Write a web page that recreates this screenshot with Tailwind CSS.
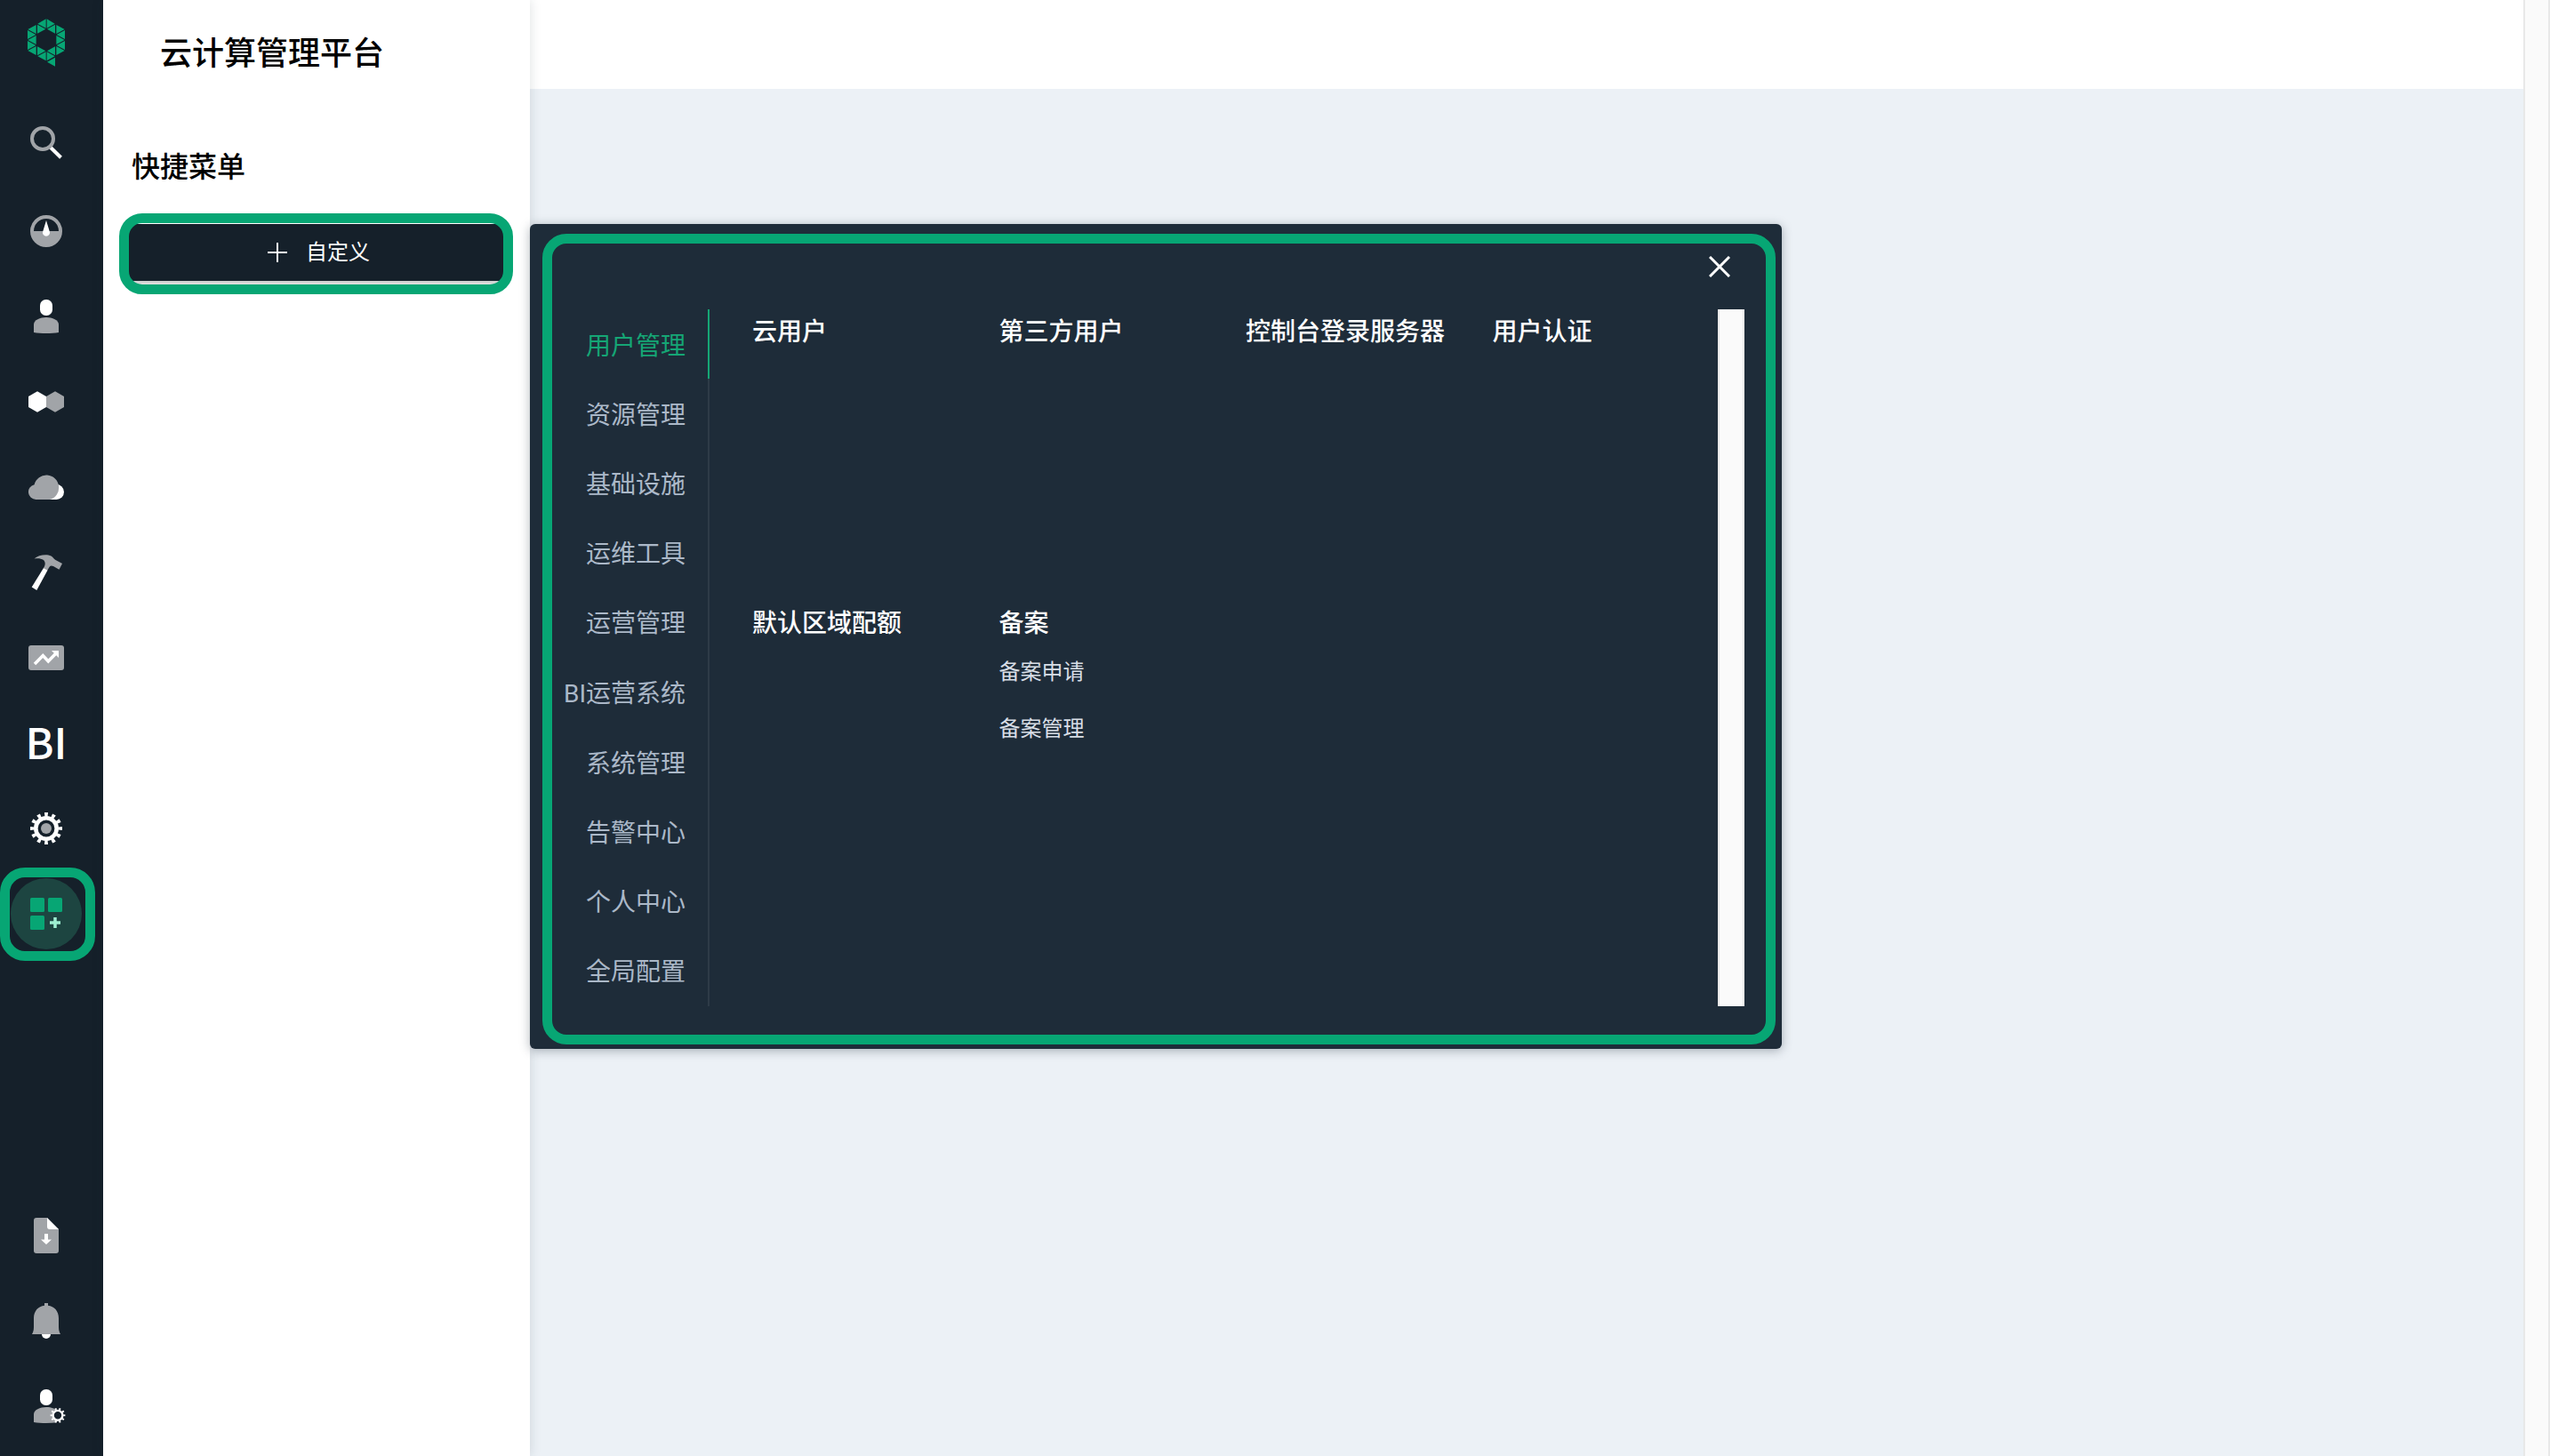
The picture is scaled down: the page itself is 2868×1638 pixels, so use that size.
<!DOCTYPE html>
<html lang="zh-CN">
<head>
<meta charset="utf-8">
<meta name="viewport" content="width=device-width, initial-scale=1">
<title>云计算管理平台</title>
<script src="https://cdn.jsdelivr.net/npm/@tailwindcss/browser@4"></script>
</head>
<body class="flex min-h-screen bg-[#ecf1f6] font-['Roboto','Noto_Sans_CJK_SC',sans-serif] text-black">

<!-- Icon rail -->
<aside class="flex w-[116px] shrink-0 flex-col justify-between bg-[#15202a] pr-3 pb-2">
  <nav class="flex flex-col" aria-label="主导航">
    <a href="#" aria-label="首页" class="mb-4 flex h-24 items-center justify-center">
      <svg class="h-[54px] w-[42px] fill-[#07a674]" viewBox="93 62 126 162">
        <path d="M94 98L122 83V113ZM93 101V131L121 116ZM94 134L122 119V149ZM93 137V167L121 152ZM94 170L122 155V185Z"/>
        <path d="M127 79L155 63V94ZM126 82V112L154 97ZM126 156V186L154 171ZM127 189L155 174V204Z"/>
        <path d="M185 79L158 63V94ZM186 82V112L159 97ZM186 156V186L159 171ZM185 189L158 174V204ZM186 193V223L159 208Z"/>
        <path d="M218 98L190 83V113ZM219 101V131L191 116ZM218 134L190 119V149ZM219 137V167L191 152ZM218 170L190 155V185Z"/>
      </svg>
    </a>
    <button type="button" aria-label="搜索" class="mb-1 flex h-24 items-center justify-center">
      <svg class="size-10" viewBox="0 0 40 40" fill="none" stroke-width="4"><path stroke="#fff" d="M25 26L36.500 37.200"/><circle cx="16" cy="16" r="12" stroke="#a1a4a8"/></svg>
    </button>
    <a href="#" aria-label="概览" class="flex h-24 items-center justify-center">
      <svg class="size-10" viewBox="0 0 40 40"><circle cx="20" cy="20" r="16" fill="none" stroke="#a1a4a8" stroke-width="4"/><path fill="#a1a4a8" d="M3 20H37A17 17 0 0 1 3 20Z"/><path fill="#fff" d="M20 8L23.800 20.500A4 4 0 1 1 16.200 20.500Z"/></svg>
    </a>
    <a href="#" aria-label="用户管理" class="flex h-24 items-center justify-center">
      <svg class="size-10" viewBox="0 0 40 40"><rect x="13" y="1" width="14" height="18" rx="6.500" fill="#fff"/><path fill="#a1a4a8" d="M6 38V29C6 24 13 21 20 21S34 24 34 29V38C26 39.300 14 39.300 6 38Z"/></svg>
    </a>
    <a href="#" aria-label="资源管理" class="flex h-24 items-center justify-center">
      <svg class="size-10" viewBox="0 0 40 40"><path fill="#fff" d="M10 8.300L20 14V26L10 31.700L0 26V14Z"/><path fill="#a1a4a8" d="M30 8.300L40 14V26L30 31.700L20 26V14Z"/></svg>
    </a>
    <a href="#" aria-label="基础设施" class="flex h-24 items-center justify-center">
      <svg class="size-10" viewBox="0 0 40 40"><path fill="#fff" d="M20 17H31.500A8.500 8.500 0 0 1 31.500 34H20Z"/><path fill="#a1a4a8" d="M8.500 34A8.500 8.500 0 0 1 6.600 17.200A14 14 0 1 1 24 34Z"/></svg>
    </a>
    <a href="#" aria-label="运维工具" class="flex h-24 items-center justify-center">
      <svg class="size-10" viewBox="0 0 40 40"><path fill="#a1a4a8" d="M6.500 4.500C11 .500 20 -1 25.500 1.500C27.500 2.500 28.500 5 30.500 6L38 10L34.500 16.700L28 13Q25 12 23.800 13.500L21.300 17.500L17 15C19 12 19.500 8.500 17 6C14 4 10.500 4 6.500 4.500Z"/><path fill="#fff" d="M17 15L21.500 17.500L9.300 40L3.700 36.500Z"/></svg>
    </a>
    <a href="#" aria-label="运营管理" class="flex h-24 items-center justify-center">
      <svg class="size-10" viewBox="0 0 40 40"><rect y="6" width="40" height="28" rx="3" fill="#a1a4a8"/><path d="M7 27L16.300 17.500L22.300 24L31 15" fill="none" stroke="#fff" stroke-width="3.500"/><path fill="#fff" d="M26 12H34V20Z"/></svg>
    </a>
    <a href="#" class="flex h-24 items-center justify-center pb-1.5 font-['Noto_Sans_CJK_SC',sans-serif] text-[48px] leading-none font-medium text-white">BI</a>
    <a href="#" aria-label="系统管理" class="flex h-24 items-center justify-center">
      <svg class="size-10" viewBox="0 0 40 40" fill="none" stroke="#fff"><circle cx="20" cy="20" r="11.700" stroke-width="4.600"/><circle cx="20" cy="20" r="15.700" stroke-width="4.600" pathLength="120" stroke-dasharray="4.600 5.400" stroke-dashoffset="2.300"/><circle cx="20" cy="20" r="6" fill="#a1a4a8" stroke="none"/></svg>
    </a>
    <div class="relative flex h-24 items-center justify-center">
      <button type="button" aria-label="快捷菜单" aria-pressed="true" class="flex size-20 items-center justify-center rounded-full bg-[#1d4541]">
        <svg class="size-10" viewBox="0 0 40 40" fill="#07a674"><rect x="2" y="2" width="16" height="16" rx="1.500"/><rect x="22" y="2" width="16" height="16" rx="1.500"/><rect x="2" y="22" width="16" height="16" rx="1.500"/><path d="M30 24V36M24 30H36" stroke="#9ff0d2" stroke-width="3.500"/></svg>
      </button>
      <span class="pointer-events-none absolute -top-1 left-0 h-[105px] w-[107px] rounded-[28px] border-[11px] border-[#07a674]"></span>
    </div>
  </nav>
  <nav class="flex flex-col" aria-label="个人">
    <a href="#" aria-label="下载" class="flex h-24 items-center justify-center">
      <svg class="size-10" viewBox="0 0 40 40"><path fill="#a1a4a8" d="M9 0H21L34 13V37Q34 40 31 40H9Q6 40 6 37V3Q6 0 9 0Z"/><path fill="#fff" d="M21 0L34 13H24Q21 13 21 10ZM18 18H22V24.500H26L20 30L14 24.500H18Z"/></svg>
    </a>
    <a href="#" aria-label="通知" class="flex h-24 items-center justify-center">
      <svg class="size-10" viewBox="0 0 40 40"><path fill="#fff" d="M15 34H25V35A5 5 0 0 1 15 35Z"/><path fill="#a1a4a8" d="M18 0H22V2.800C29 3.500 34 9 34 17V27C34 31 35 33 36 35H4C5 33 6 31 6 27V17C6 9 11 3.500 18 2.800Z"/></svg>
    </a>
    <a href="#" aria-label="账户设置" class="flex h-24 items-center justify-center">
      <svg class="size-10 overflow-visible" viewBox="0 0 40 40"><rect x="13" y="1" width="14" height="18" rx="6.500" fill="#fff"/><path fill="#a1a4a8" d="M6 38V29C6 24 13 21 20 21C26 21 30 23 32 25V38.300C24 39.300 14 39.300 6 38Z"/><circle cx="33" cy="30.300" r="5" fill="#15202a"/><g fill="none" stroke="#fff"><circle cx="33" cy="30.300" r="5.400" stroke-width="2.400"/><circle cx="33" cy="30.300" r="7.300" stroke-width="2.200" pathLength="120" stroke-dasharray="5 7" stroke-dashoffset="2.500"/></g></svg>
    </a>
  </nav>
</aside>

<!-- Quick menu drawer -->
<section class="relative z-10 w-[480px] shrink-0 bg-white shadow-[0_0_12px_rgba(30,44,57,0.15)]">
  <h1 class="mt-[34px] pl-16 text-[36px] leading-[54px] font-medium">云计算管理平台</h1>
  <h2 class="mt-[76px] pl-8 text-[32px] leading-[48px] font-medium">快捷菜单</h2>
  <div class="relative mx-6 mt-10">
    <button type="button" class="flex h-16 w-full items-center justify-center gap-5 rounded-sm bg-[#15202a] pl-1 text-[24px] text-white shadow-[0_4px_4px_rgba(0,0,0,0.2)]">
      <svg class="size-6" viewBox="0 0 24 24" fill="none" stroke="#fff" stroke-width="2"><path d="M12 1V23M1 12H23"/></svg>
      自定义
    </button>
    <span class="pointer-events-none absolute -top-3 -right-[5px] -bottom-[15px] -left-[6px] rounded-[26px] border-[11px] border-[#07a674]"></span>
  </div>

  <!-- Flyout with every menu entry -->
  <div role="dialog" aria-label="自定义快捷菜单" class="absolute top-[252px] left-full flex w-[1408px] flex-col rounded-md bg-[#1e2c39] pr-[42px] pb-12 pl-[42px] text-white shadow-[0_2px_12px_rgba(30,44,57,0.35)]">
    <div class="flex h-24 items-center justify-end">
      <button type="button" aria-label="关闭" class="mr-4 size-6"><svg class="size-6" viewBox="0 0 24 24" fill="none" stroke="#fff" stroke-width="3"><path d="M1 1L23 23M23 1L1 23"/></svg></button>
    </div>
    <div class="flex">
      <nav class="flex w-[160px] shrink-0 flex-col pb-0.5 text-[28px] text-[#abb8c8] shadow-[inset_-2px_0_0_#2e3b47]">
        <a href="#" class="flex h-[78px] items-center justify-end border-r-2 border-[#15a675] pt-1.5 pr-[25px] whitespace-nowrap text-[#15a675]">用户管理</a>
        <a href="#" class="flex h-[78px] items-center justify-end pt-1.5 pr-[27px] whitespace-nowrap">资源管理</a>
        <a href="#" class="flex h-[78px] items-center justify-end pt-1.5 pr-[27px] whitespace-nowrap">基础设施</a>
        <a href="#" class="flex h-[78px] items-center justify-end pt-1.5 pr-[27px] whitespace-nowrap">运维工具</a>
        <a href="#" class="flex h-[78px] items-center justify-end pt-1.5 pr-[27px] whitespace-nowrap">运营管理</a>
        <a href="#" class="flex h-20 items-center justify-end pt-1.5 pr-[27px] whitespace-nowrap">BI运营系统</a>
        <a href="#" class="flex h-[78px] items-center justify-end pt-1.5 pr-[27px] whitespace-nowrap">系统管理</a>
        <a href="#" class="flex h-[78px] items-center justify-end pt-1.5 pr-[27px] whitespace-nowrap">告警中心</a>
        <a href="#" class="flex h-[78px] items-center justify-end pt-1.5 pr-[27px] whitespace-nowrap">个人中心</a>
        <a href="#" class="flex h-[78px] items-center justify-end pt-1.5 pr-[27px] whitespace-nowrap">全局配置</a>
      </nav>
      <div class="grid flex-1 auto-rows-[328px] grid-cols-4 content-start pl-6 text-[28px] leading-[52px] font-medium">
        <a href="#" class="pl-6 whitespace-nowrap">云用户</a>
        <a href="#" class="pl-6 whitespace-nowrap">第三方用户</a>
        <a href="#" class="pl-6 whitespace-nowrap">控制台登录服务器</a>
        <a href="#" class="pl-6 whitespace-nowrap">用户认证</a>
        <a href="#" class="pl-6 whitespace-nowrap">默认区域配额</a>
        <div class="pl-6">
          <h3>备案</h3>
          <div class="-mt-1 flex flex-col text-[24px] leading-[64px] font-normal text-[#d8dee6]">
            <a href="#">备案申请</a>
            <a href="#">备案管理</a>
          </div>
        </div>
      </div>
      <div class="w-[30px] shrink-0 border-x-2 border-[#e8e8e8] bg-[#fafafa]"></div>
    </div>
    <span class="pointer-events-none absolute top-[11px] right-[7px] bottom-[5px] left-[14px] rounded-[27px] border-[11px] border-[#07a674]"></span>
  </div>
</section>

<!-- Page area -->
<main class="flex-1">
  <header class="h-[100px] bg-white"></header>
</main>
<div class="w-[30px] shrink-0 border-x-2 border-[#e8e8e8] bg-[#fafafa]"></div>
</body>
</html>
